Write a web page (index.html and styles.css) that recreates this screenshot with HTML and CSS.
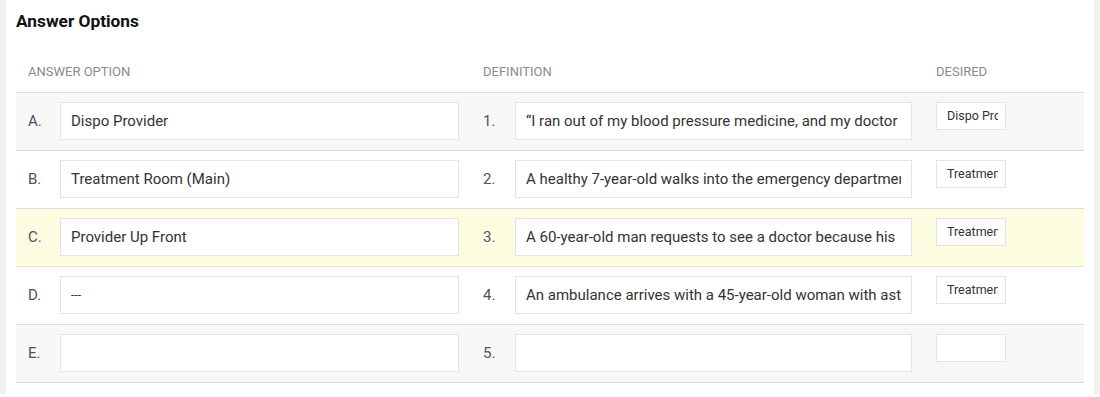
FILE: index.html
```html
<!DOCTYPE html>
<html>
<head>
<meta charset="utf-8">
<link rel="stylesheet" href="styles.css">
</head>
<body>
<div class="page">
  <div class="card">
    <h3 class="title">Answer Options</h3>
    <div class="table">
      <div class="head">
        <div class="h-opt">ANSWER OPTION</div>
        <div class="h-def">DEFINITION</div>
        <div class="h-des">DESIRED</div>
      </div>
      <div class="row odd">
        <div class="label">A.</div>
        <div class="field opt"><span class="val">Dispo Provider</span></div>
        <div class="label num">1.</div>
        <div class="field def"><span class="val">“I ran out of my blood pressure medicine, and my doctor</span></div>
        <div class="desired"><span class="dval">Dispo Provider</span></div>
      </div>
      <div class="row">
        <div class="label">B.</div>
        <div class="field opt"><span class="val">Treatment Room (Main)</span></div>
        <div class="label num">2.</div>
        <div class="field def"><span class="val">A healthy 7-year-old walks into the emergency department</span></div>
        <div class="desired"><span class="dval">Treatment Room</span></div>
      </div>
      <div class="row hl">
        <div class="label">C.</div>
        <div class="field opt"><span class="val">Provider Up Front</span></div>
        <div class="label num">3.</div>
        <div class="field def"><span class="val">A 60-year-old man requests to see a doctor because his</span></div>
        <div class="desired"><span class="dval">Treatment Room</span></div>
      </div>
      <div class="row">
        <div class="label">D.</div>
        <div class="field opt"><span class="val small">---</span></div>
        <div class="label num">4.</div>
        <div class="field def"><span class="val">An ambulance arrives with a 45-year-old woman with asthma</span></div>
        <div class="desired"><span class="dval">Treatment Room</span></div>
      </div>
      <div class="row odd">
        <div class="label">E.</div>
        <div class="field opt"><span class="val"></span></div>
        <div class="label num">5.</div>
        <div class="field def"><span class="val"></span></div>
        <div class="desired"><span class="dval"></span></div>
      </div>
    </div>
  </div>
</div>
</body>
</html>
```
FILE: styles.css
```css
html, body {
  margin: 0;
  padding: 0;
  background: #ffffff;
  font-family: Roboto, "Liberation Sans", Arial, sans-serif;
}
.page {
  background: #f1f1f1;
  padding: 0 6px;
  height: 394px;
  box-sizing: border-box;
}
.card {
  background: #ffffff;
  height: 100%;
  padding: 10px 10px 0 10px;
  box-sizing: border-box;
}
.title {
  margin: 0;
  font-size: 17.3px;
  line-height: 22px;
  font-weight: 700;
  color: #111;
}
.table {
  width: 1068px;
}
.head {
  display: flex;
  padding: 32px 12px 12px 12px;
  border-bottom: 1px solid #dcdcdc;
  font-size: 13px;
  line-height: 16px;
  color: #8a8a8a;
}
.h-opt { width: 455px; }
.h-def { width: 453px; }
.h-des { flex: 1; }
.row {
  display: flex;
  align-items: flex-start;
  height: 58px;
  padding: 9px 12px 0 12px;
  box-sizing: border-box;
  border-bottom: 1px solid #dcdcdc;
  background: #ffffff;
}
.row.odd { background: #f7f7f7; }
.row.hl { background: #fdfde1; border-bottom-color: #e2e2d0; }
.label {
  width: 32px;
  height: 38px;
  line-height: 38px;
  font-size: 15px;
  color: #4b5263;
}
.num { margin-left: 24px; }
.field {
  height: 38px;
  box-sizing: border-box;
  border: 1px solid #e4e4e4;
  background: #fff;
  padding: 0 10px;
  line-height: 36px;
  font-size: 15px;
  color: #333;
}
.val {
  display: block;
  white-space: nowrap;
  overflow: hidden;
}
.val.small { font-size: 12px; }
.opt { width: 399px; }
.def { width: 397px; }
.desired {
  margin-left: 24px;
  width: 70px;
  height: 28px;
  box-sizing: border-box;
  border: 1px solid #e4e4e4;
  background: #fff;
  padding: 0 7px 0 10px;
  line-height: 26px;
  font-size: 12.5px;
  color: #333;
}
.dval {
  display: block;
  white-space: nowrap;
  overflow: hidden;
}
```
